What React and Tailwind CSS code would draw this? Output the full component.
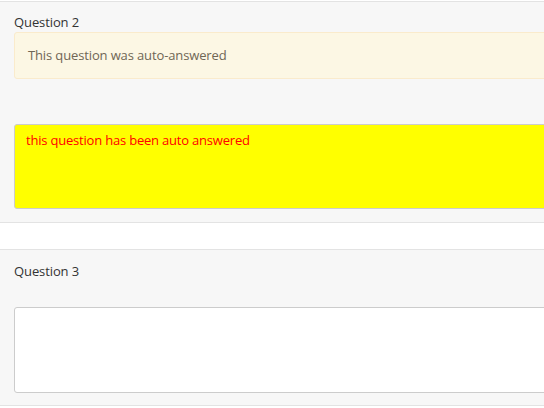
export default function App() {
  return (
    <div className="w-[544px] h-[408px] overflow-hidden bg-white text-[13px] leading-[18px] text-[#333333]" style={{ fontFamily: '"Open Sans", "Liberation Sans", sans-serif' }}>
      <div className="w-[620px] pt-px">
        {/* Question 2 */}
        <section className="border-y border-[#e3e3e3] bg-[#f7f7f7] pl-[14px] pt-[11px] pb-[13px]">
          <label className="block mb-px tracking-[-0.1px]">Question 2</label>
          <div className="rounded-[3px] border border-[#faebcc] bg-[#fcf7e4] px-[13px] pt-[13px] pb-[14px] tracking-[-0.13px] text-[#6f6655]">
            This question was auto-answered
          </div>
          <textarea
            readOnly
            value="this question has been auto answered"
            className="mt-[45px] block h-[85px] w-full resize-none rounded-[3px] border border-[#cccccc] bg-[#ffff00] px-[11px] py-[6px] tracking-[-0.2px] text-[#ff0000] outline-none"
          />
        </section>

        <div className="h-[26px]" />

        {/* Question 3 */}
        <section className="border-y border-[#e3e3e3] bg-[#f7f7f7] pl-[14px] pt-[12px] pb-[12px]">
          <label className="block tracking-[-0.1px]">Question 3</label>
          <textarea
            readOnly
            className="mt-[27px] block h-[86px] w-full resize-none rounded-[3px] border border-[#cccccc] bg-white px-[11px] py-[6px] outline-none"
          />
        </section>
      </div>
    </div>
  );
}
